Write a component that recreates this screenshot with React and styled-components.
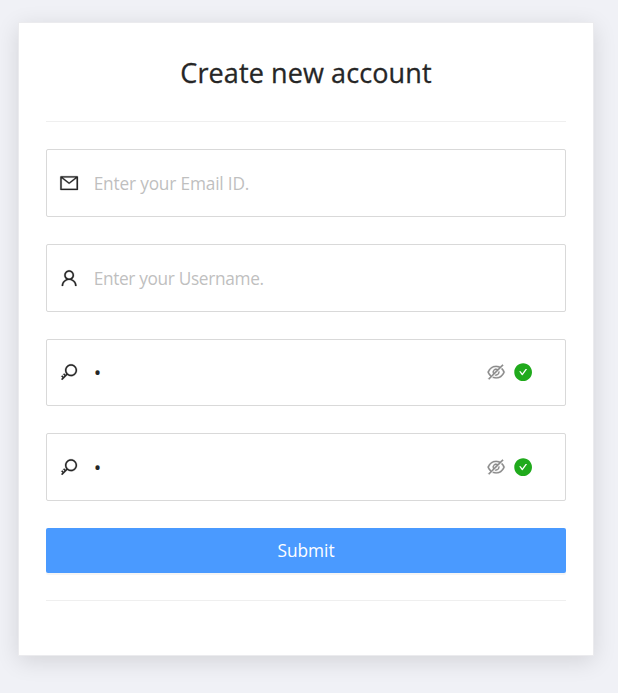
import React from "react";
import styled, { createGlobalStyle } from "styled-components";
import {
  AiOutlineMail,
  AiOutlineUser,
  AiOutlineEyeInvisible,
  AiFillCheckCircle,
} from "react-icons/ai";

function KeyIcon() {
  return (
    <svg viewBox="0 0 1024 1024" width="1em" height="1em" fill="currentColor" stroke="currentColor">
      <path
        fillRule="evenodd"
        d="M608 112c-167.9 0-304 136.1-304 304 0 70.3 23.9 135 63.9 186.5l-41.1 41.1-62.3-62.3a8.15 8.15 0 0 0-11.4 0l-39.8 39.8a8.15 8.15 0 0 0 0 11.4l62.3 62.3-44.9 44.9-62.3-62.3a8.15 8.15 0 0 0-11.4 0l-39.8 39.8a8.15 8.15 0 0 0 0 11.4l62.3 62.3-65.3 65.3a8.03 8.03 0 0 0 0 11.3l42.3 42.3c3.1 3.1 8.2 3.1 11.3 0l253.6-253.6A304.06 304.06 0 0 0 608 720c167.9 0 304-136.1 304-304S775.9 112 608 112zM608 648a232 232 0 1 1 0-464 232 232 0 0 1 0 464z"
      />
    </svg>
  );
}

const fields = [
  { id: "email", icon: AiOutlineMail, type: "email", placeholder: "Enter your Email ID.", spacing: "-0.18px" },
  { id: "username", icon: AiOutlineUser, type: "text", placeholder: "Enter your Username.", spacing: "-0.34px" },
  { id: "password", icon: KeyIcon, secret: true },
  { id: "confirm", icon: KeyIcon, secret: true },
];

export default function App() {
  return (
    <Page>
      <GlobalStyle />
      <Card>
        <Title>Create new account</Title>
        <Divider />
        <Form onSubmit={(e) => e.preventDefault()}>
          {fields.map(({ id, icon: Icon, type, placeholder, spacing, secret }) => (
            <Field key={id}>
              <Prefix>
                <Icon />
              </Prefix>
              {secret ? (
                <Secret>•</Secret>
              ) : (
                <Input id={id} type={type} placeholder={placeholder} $spacing={spacing} />
              )}
              {secret && (
                <Suffix>
                  <Toggle type="button">
                    <AiOutlineEyeInvisible />
                  </Toggle>
                  <Valid />
                </Suffix>
              )}
            </Field>
          ))}
          <Submit>Submit</Submit>
        </Form>
        <Divider />
      </Card>
    </Page>
  );
}

// STYLED COMPONENTS
const GlobalStyle = createGlobalStyle`
  * {
    box-sizing: border-box;
  }
  body {
    margin: 0;
    background: #f0f1f6;
    font-family: "Segoe UI", "Open Sans", sans-serif;
    color: #262626;
  }
`;

const Page = styled.div`
  min-height: 693px;
  padding: 22px 24px 0 18px;
  background: #f0f1f6;
`;

const Card = styled.div`
  height: 634px;
  padding: 31px 27px 0;
  background: #ffffff;
  border: 1px solid #ebebee;
  box-shadow: 0 5px 22px rgba(0, 0, 0, 0.12);
`;

const Title = styled.h1`
  margin: 0 0 30px;
  font-size: 27px;
  font-weight: 500;
  line-height: 37px;
  letter-spacing: 0.1px;
  text-align: center;
  -webkit-text-stroke: 0.3px #262626;
`;

const Divider = styled.div`
  height: 1px;
  background: #efefef;
`;

const Form = styled.form`
  display: flex;
  flex-direction: column;
  gap: 27px;
  padding: 27.45px 0 26.9px;
`;

const Field = styled.div`
  display: flex;
  align-items: center;
  height: 67.6px;
  padding: 0 32px 0 12px;
  border: 1px solid #d9d9d9;
  border-radius: 2px;
`;

const Prefix = styled.span`
  display: flex;
  margin-right: 14.4px;
  font-size: 20.25px;
  svg {
    stroke-width: 12px;
  }
`;

const Input = styled.input`
  flex: 1;
  min-width: 0;
  padding: 1px 0 0;
  border: 0;
  outline: none;
  background: transparent;
  font: inherit;
  font-size: 17.3px;
  letter-spacing: ${(props) => props.$spacing};
  color: #262626;
  &::placeholder {
    color: #bfbfbf;
  }
`;

const Secret = styled.span`
  flex: 1;
  padding-top: 1px;
  font-size: 20px;
`;

const Suffix = styled.span`
  display: flex;
  align-items: center;
  gap: 7px;
`;

const Toggle = styled.button`
  display: flex;
  padding: 0;
  border: 0;
  background: none;
  font-size: 20.25px;
  color: #8c8c8c;
  svg {
    stroke-width: 12px;
  }
`;

const Valid = styled(AiFillCheckCircle)`
  font-size: 20.25px;
  color: #20aa1c;
`;

const Submit = styled.button`
  height: 45px;
  padding: 0;
  border: 0;
  border-radius: 2px;
  background: #4a9aff;
  box-shadow: 0 2px 0 rgba(0, 0, 0, 0.04);
  font: inherit;
  font-size: 17.3px;
  color: #ffffff;
`;
